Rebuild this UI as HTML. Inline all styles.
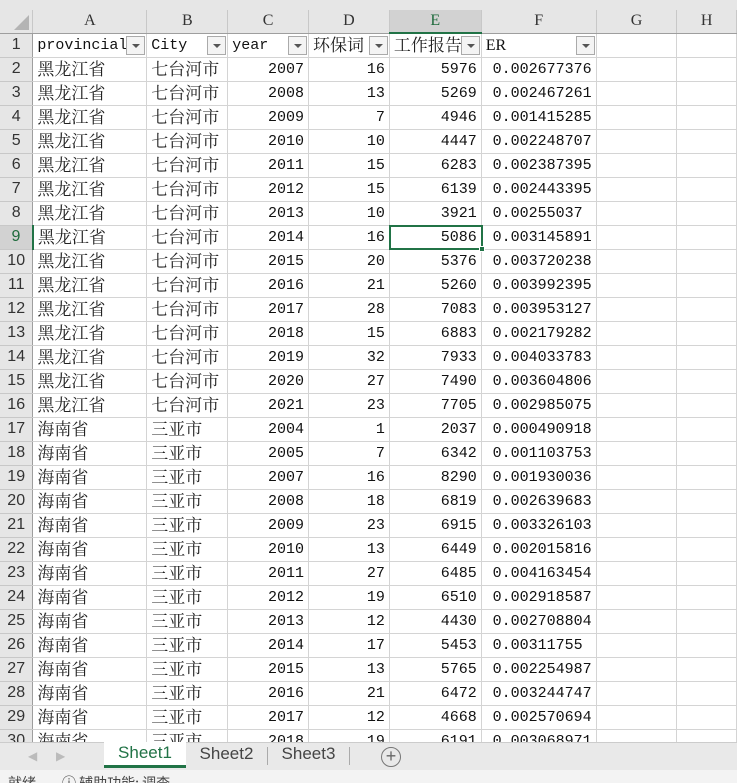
<!DOCTYPE html>
<html><head><meta charset="utf-8"><style>
*{margin:0;padding:0;box-sizing:border-box}
body{width:737px;height:783px;overflow:hidden;background:#fff;position:relative;font-family:"Liberation Mono","Noto Serif CJK SC",serif;}
.top{position:absolute;left:0;top:0;width:737px;height:10px;background:#e6e6e6}
table{position:absolute;left:0;top:10px;border-collapse:collapse;table-layout:fixed}
td{height:24px;border-right:1px solid #d4d4d4;border-bottom:1px solid #d4d4d4;font-size:15px;color:#111;white-space:nowrap;overflow:hidden;padding:1px 2px 0 4px;line-height:22px;position:relative}
tr.h td{height:23px;background:#e6e6e6;text-align:center;font-family:"Liberation Serif",serif;font-size:16px;color:#333;border-right:1px solid #c8c8c8;border-bottom:1px solid #9e9e9e;padding:0;vertical-align:middle}
td.rh{background:#e6e6e6;text-align:center;font-family:"Liberation Sans",sans-serif;font-size:16px;color:#333;padding:0;border-right:1px solid #9e9e9e;border-bottom:1px solid #c8c8c8}
td.r{text-align:right;padding-right:4px}
td.cj{font-family:"Noto Serif CJK SC",serif;font-size:17px;color:#222;padding-top:3px;padding-bottom:0;line-height:14px;vertical-align:top}
.f{position:absolute;right:1px;top:2px;width:19px;height:19px;border:1px solid #aaa;background:#f4f4f4}
.f:after{content:"";position:absolute;left:5px;top:7px;border-left:4px solid transparent;border-right:4px solid transparent;border-top:4px solid #555}
.sel{position:absolute;left:389px;top:225px;width:94px;height:25px;border:2px solid #217346}
.sel i{position:absolute;right:-4px;bottom:-4px;width:6px;height:6px;background:#217346;border:1px solid #fff}
.tabs{position:absolute;left:0;top:742px;width:737px;height:28px;background:#e9e9e9;border-top:1px solid #ccc;font-family:"Liberation Sans",sans-serif;font-size:17px;color:#444}
.tab{position:absolute;top:0;height:26px;line-height:22px}
.status{position:absolute;left:0;top:770px;width:737px;height:13px;background:#f3f3f3;font-family:"Noto Sans CJK SC",sans-serif;font-size:14px;color:#444;overflow:hidden}
.status span{position:absolute;top:3px;line-height:20px}
</style></head><body>
<div class="top"></div>
<table>
<colgroup><col style="width:33px"><col style="width:114px"><col style="width:81px"><col style="width:81px"><col style="width:81px"><col style="width:92px"><col style="width:115px"><col style="width:81px"><col style="width:60px"></colgroup>
<tr class="h"><td style="position:relative"><div style="position:absolute;right:3px;bottom:3px;border-left:15px solid transparent;border-bottom:15px solid #b4b4b4"></div></td><td>A</td><td>B</td><td>C</td><td>D</td><td style="background:#d2d2d2;color:#1e6b3c;border-bottom:2px solid #217346">E</td><td>F</td><td>G</td><td>H</td></tr>
<tr><td class="rh">1</td><td>provincial<span class="f"></span></td><td>City<span class="f"></span></td><td>year<span class="f"></span></td><td class="cj">环保词<span class="f"></span></td><td class="cj">工作报告<span class="f"></span></td><td style="font-family:'Liberation Serif',serif;font-size:16px">ER<span class="f"></span></td><td></td><td></td></tr>
<tr><td class="rh">2</td><td class="cj">黑龙江省</td><td class="cj">七台河市</td><td class="r">2007</td><td class="r">16</td><td class="r">5976</td><td class="r">0.002677376</td><td></td><td></td></tr>
<tr><td class="rh">3</td><td class="cj">黑龙江省</td><td class="cj">七台河市</td><td class="r">2008</td><td class="r">13</td><td class="r">5269</td><td class="r">0.002467261</td><td></td><td></td></tr>
<tr><td class="rh">4</td><td class="cj">黑龙江省</td><td class="cj">七台河市</td><td class="r">2009</td><td class="r">7</td><td class="r">4946</td><td class="r">0.001415285</td><td></td><td></td></tr>
<tr><td class="rh">5</td><td class="cj">黑龙江省</td><td class="cj">七台河市</td><td class="r">2010</td><td class="r">10</td><td class="r">4447</td><td class="r">0.002248707</td><td></td><td></td></tr>
<tr><td class="rh">6</td><td class="cj">黑龙江省</td><td class="cj">七台河市</td><td class="r">2011</td><td class="r">15</td><td class="r">6283</td><td class="r">0.002387395</td><td></td><td></td></tr>
<tr><td class="rh">7</td><td class="cj">黑龙江省</td><td class="cj">七台河市</td><td class="r">2012</td><td class="r">15</td><td class="r">6139</td><td class="r">0.002443395</td><td></td><td></td></tr>
<tr><td class="rh">8</td><td class="cj">黑龙江省</td><td class="cj">七台河市</td><td class="r">2013</td><td class="r">10</td><td class="r">3921</td><td class="r">0.00255037&nbsp;</td><td></td><td></td></tr>
<tr><td class="rh" style="background:#d2d2d2;color:#1e6b3c;border-right:2px solid #217346">9</td><td class="cj">黑龙江省</td><td class="cj">七台河市</td><td class="r">2014</td><td class="r">16</td><td class="r">5086</td><td class="r">0.003145891</td><td></td><td></td></tr>
<tr><td class="rh">10</td><td class="cj">黑龙江省</td><td class="cj">七台河市</td><td class="r">2015</td><td class="r">20</td><td class="r">5376</td><td class="r">0.003720238</td><td></td><td></td></tr>
<tr><td class="rh">11</td><td class="cj">黑龙江省</td><td class="cj">七台河市</td><td class="r">2016</td><td class="r">21</td><td class="r">5260</td><td class="r">0.003992395</td><td></td><td></td></tr>
<tr><td class="rh">12</td><td class="cj">黑龙江省</td><td class="cj">七台河市</td><td class="r">2017</td><td class="r">28</td><td class="r">7083</td><td class="r">0.003953127</td><td></td><td></td></tr>
<tr><td class="rh">13</td><td class="cj">黑龙江省</td><td class="cj">七台河市</td><td class="r">2018</td><td class="r">15</td><td class="r">6883</td><td class="r">0.002179282</td><td></td><td></td></tr>
<tr><td class="rh">14</td><td class="cj">黑龙江省</td><td class="cj">七台河市</td><td class="r">2019</td><td class="r">32</td><td class="r">7933</td><td class="r">0.004033783</td><td></td><td></td></tr>
<tr><td class="rh">15</td><td class="cj">黑龙江省</td><td class="cj">七台河市</td><td class="r">2020</td><td class="r">27</td><td class="r">7490</td><td class="r">0.003604806</td><td></td><td></td></tr>
<tr><td class="rh">16</td><td class="cj">黑龙江省</td><td class="cj">七台河市</td><td class="r">2021</td><td class="r">23</td><td class="r">7705</td><td class="r">0.002985075</td><td></td><td></td></tr>
<tr><td class="rh">17</td><td class="cj">海南省</td><td class="cj">三亚市</td><td class="r">2004</td><td class="r">1</td><td class="r">2037</td><td class="r">0.000490918</td><td></td><td></td></tr>
<tr><td class="rh">18</td><td class="cj">海南省</td><td class="cj">三亚市</td><td class="r">2005</td><td class="r">7</td><td class="r">6342</td><td class="r">0.001103753</td><td></td><td></td></tr>
<tr><td class="rh">19</td><td class="cj">海南省</td><td class="cj">三亚市</td><td class="r">2007</td><td class="r">16</td><td class="r">8290</td><td class="r">0.001930036</td><td></td><td></td></tr>
<tr><td class="rh">20</td><td class="cj">海南省</td><td class="cj">三亚市</td><td class="r">2008</td><td class="r">18</td><td class="r">6819</td><td class="r">0.002639683</td><td></td><td></td></tr>
<tr><td class="rh">21</td><td class="cj">海南省</td><td class="cj">三亚市</td><td class="r">2009</td><td class="r">23</td><td class="r">6915</td><td class="r">0.003326103</td><td></td><td></td></tr>
<tr><td class="rh">22</td><td class="cj">海南省</td><td class="cj">三亚市</td><td class="r">2010</td><td class="r">13</td><td class="r">6449</td><td class="r">0.002015816</td><td></td><td></td></tr>
<tr><td class="rh">23</td><td class="cj">海南省</td><td class="cj">三亚市</td><td class="r">2011</td><td class="r">27</td><td class="r">6485</td><td class="r">0.004163454</td><td></td><td></td></tr>
<tr><td class="rh">24</td><td class="cj">海南省</td><td class="cj">三亚市</td><td class="r">2012</td><td class="r">19</td><td class="r">6510</td><td class="r">0.002918587</td><td></td><td></td></tr>
<tr><td class="rh">25</td><td class="cj">海南省</td><td class="cj">三亚市</td><td class="r">2013</td><td class="r">12</td><td class="r">4430</td><td class="r">0.002708804</td><td></td><td></td></tr>
<tr><td class="rh">26</td><td class="cj">海南省</td><td class="cj">三亚市</td><td class="r">2014</td><td class="r">17</td><td class="r">5453</td><td class="r">0.00311755&nbsp;</td><td></td><td></td></tr>
<tr><td class="rh">27</td><td class="cj">海南省</td><td class="cj">三亚市</td><td class="r">2015</td><td class="r">13</td><td class="r">5765</td><td class="r">0.002254987</td><td></td><td></td></tr>
<tr><td class="rh">28</td><td class="cj">海南省</td><td class="cj">三亚市</td><td class="r">2016</td><td class="r">21</td><td class="r">6472</td><td class="r">0.003244747</td><td></td><td></td></tr>
<tr><td class="rh">29</td><td class="cj">海南省</td><td class="cj">三亚市</td><td class="r">2017</td><td class="r">12</td><td class="r">4668</td><td class="r">0.002570694</td><td></td><td></td></tr>
<tr><td class="rh">30</td><td class="cj">海南省</td><td class="cj">三亚市</td><td class="r">2018</td><td class="r">19</td><td class="r">6191</td><td class="r">0.003068971</td><td></td><td></td></tr>
</table>
<div class="sel"><i></i></div>
<div class="tabs">
<span style="position:absolute;left:28px;top:6px;color:#bbb;font-size:12px">&#9664;</span>
<span style="position:absolute;left:56px;top:6px;color:#bbb;font-size:12px">&#9654;</span>
<div class="tab" style="left:104px;width:82px;background:#fff;color:#217346;text-align:center;border-bottom:3px solid #217346;top:-1px">Sheet1</div>
<div class="tab" style="left:186px;width:82px;text-align:center;border-right:1px solid #aaa;height:18px;top:4px;line-height:14px">Sheet2</div>
<div class="tab" style="left:268px;width:82px;text-align:center;border-right:1px solid #aaa;height:18px;top:4px;line-height:14px">Sheet3</div>
<div style="position:absolute;left:381px;top:4px;width:20px;height:20px;border:1.5px solid #777;border-radius:50%;text-align:center;line-height:17px;font-size:18px;color:#666">+</div>
</div>
<div class="status"><span style="left:8px">就绪</span><span style="left:62px">ⓘ 辅助功能: 调查</span></div>
</body></html>
